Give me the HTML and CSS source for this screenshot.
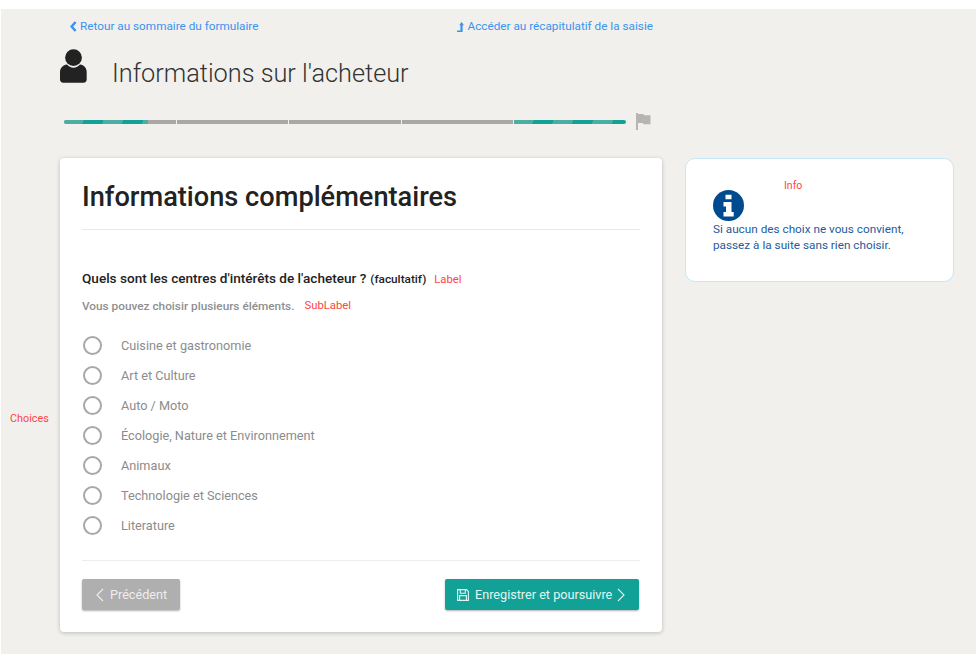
FILE: index.html
```html
<!DOCTYPE html>
<html lang="fr">
<head>
<meta charset="utf-8">
<title>Informations sur l'acheteur</title>
<link rel="stylesheet" href="styles.css">
</head>
<body>
<div class="page">
  <nav class="toplinks">
    <a class="link link-back" href="#"><svg class="ico-chev" viewBox="0 0 7 11"><path d="M5.600 1 1.600 5.500l4 4.500" fill="none" stroke="currentColor" stroke-width="2.500"/></svg>Retour au sommaire du formulaire</a>
    <a class="link link-recap" href="#"><svg class="ico-turn" viewBox="0 0 7 10"><path d="M4.600 0 7 3.200H5.600V10H0V8.400h3.400V3.200H2.200z" fill="currentColor"/></svg>Accéder au récapitulatif de la saisie</a>
  </nav>
  <header class="pagehead">
    <svg class="ico-user" viewBox="0 0 27 34"><circle cx="13.500" cy="8.600" r="8.400" fill="#222"/><path d="M7 15.500c1.600 2 3.900 3.200 6.500 3.200s4.900-1.200 6.500-3.200c4 .6 6.700 3.400 6.700 7.500v7.500c0 1.900-1.300 3.200-3.200 3.200H3.200C1.300 33.700 0 32.400 0 30.500V23c0-4.100 3-6.900 7-7.500z" fill="#222"/></svg>
    <h1>Informations sur l'acheteur</h1>
  </header>
  <div class="progress">
    <div class="seg seg-first"><div class="seg-fill"></div></div>
    <div class="seg"></div>
    <div class="seg"></div>
    <div class="seg"></div>
    <div class="seg seg-last"><div class="seg-fill seg-fill-full"></div></div>
    <svg class="ico-flag" viewBox="0 0 15 17"><path d="M0 0h2v17H0zM2 1h5l1.500 1.300H14.500v9H8L6.500 10H2z" fill="#b5b5b3"/></svg>
  </div>
  <div class="columns">
    <main class="card">
      <h2>Informations complémentaires</h2>
      <div class="question">
        <div class="label-row"><span class="label">Quels sont les centres d'intérêts de l'acheteur ?</span> <span class="optional">(facultatif)</span><span class="note note-label">Label</span></div>
        <div class="sub-row"><span class="sublabel">Vous pouvez choisir plusieurs éléments.</span><span class="note note-sub">SubLabel</span></div>
      </div>
      <ul class="choices">
        <li><span class="radio"></span>Cuisine et gastronomie</li>
        <li><span class="radio"></span>Art et Culture</li>
        <li><span class="radio"></span>Auto / Moto</li>
        <li><span class="radio"></span>Écologie, Nature et Environnement</li>
        <li><span class="radio"></span>Animaux</li>
        <li><span class="radio"></span>Technologie et Sciences</li>
        <li><span class="radio"></span>Literature</li>
      </ul>
      <div class="actions">
        <button class="btn btn-prev" type="button"><svg class="ico-btnchev" viewBox="0 0 8 14"><path d="M7 1 1 7l6 6" fill="none" stroke="currentColor" stroke-width="1.100"/></svg>Précédent</button>
        <button class="btn btn-next" type="button"><svg class="ico-save" viewBox="0 0 12 12"><path d="M1.500.6h8L11.400 2.500v8.900H.6V.6zM3.300.8v3.400h5V.8M2.600 11.200V6.600h6.800v4.600" fill="none" stroke="currentColor" stroke-width="1.100"/></svg>Enregistrer et poursuivre<svg class="ico-btnchev ico-right" viewBox="0 0 8 14"><path d="m1 1 6 6-6 6" fill="none" stroke="currentColor" stroke-width="1.100"/></svg></button>
      </div>
    </main>
    <aside class="info">
      <svg class="ico-info" viewBox="0 0 31 31"><circle cx="15.500" cy="15.500" r="15.500" fill="#004a8f"/><path d="M12.500 4.800h6v4.400h-6zM10.500 12h8v10h2.200v4.400h-10.200V22h2.500v-5.600h-2.500z" fill="#fff"/></svg>
      <p>Si aucun des choix ne vous convient, passez à la suite sans rien choisir.</p>
      <span class="note note-info">Info</span>
    </aside>
  </div>
  <span class="note note-choices">Choices</span>
</div>
</body>
</html>
```
FILE: styles.css
```css
* { box-sizing: border-box; }
html, body { margin: 0; padding: 0; background: #fff; }
body { font-family: Roboto, "Liberation Sans", sans-serif; overflow: hidden; }
.page {
  position: relative;
  margin: 9px 0 0 1px;
  height: 645px;
  background: #f1f0ec;
  padding: 0 22px 0 59px;
}
.toplinks { display: flex; height: 35px; padding: 10px 0 0 10px; font-size: 11.750px; line-height: 15px; align-items: flex-start; }
.link { color: #3a93ee; text-decoration: none; display: flex; align-items: center; white-space: nowrap; }
.link-recap { margin-left: 199px; }
.ico-chev { width: 7px; height: 11px; margin-right: 3px; }
.ico-turn { width: 7px; height: 10px; margin-right: 3px; }
.pagehead { display: flex; align-items: flex-start; height: 68px; }
.ico-user { width: 27px; height: 34px; margin-top: 5px; }
h1 { margin: 14px 0 0 25px; font-size: 25.300px; line-height: 32px; font-weight: 300; color: #333; }
.progress { display: flex; align-items: center; gap: 1px; height: 20px; margin-left: 4px; width: 595px; padding-right: 33px; position: relative; }
.seg { flex: 1; height: 4px; background: #a9a8a5; }
.seg-first { border-radius: 2px 0 0 2px; overflow: hidden; }
.seg-last { border-radius: 0 2px 2px 0; overflow: hidden; }
.seg-fill {
  width: 75%;
  height: 100%;
  background: repeating-linear-gradient(115deg, #4baea3 0 18px, #12a196 18px 36px);
}
.seg-fill-full { width: 100%; }
.ico-flag { position: absolute; left: 572px; top: 1px; width: 15px; height: 17px; }
.columns { display: flex; align-items: flex-start; gap: 23px; margin-top: 26px; }
.card {
  width: 602px;
  height: 474px;
  background: #fff;
  border-radius: 4px;
  box-shadow: 0 1px 4px rgba(0,0,0,.22);
  padding: 0 22px;
}
h2 {
  margin: 0;
  height: 72px;
  padding-top: 22px;
  font-size: 27.200px;
  line-height: 34px;
  font-weight: 500;
  color: #222;
  border-bottom: 1px solid #e8e8e6;
}
.question { margin-top: 40px; }
.label-row { display: flex; align-items: baseline; height: 20px; color: #222; white-space: pre; }
.label { font-size: 13.570px; font-weight: 500; }
.optional { font-size: 11.800px; font-weight: 500; margin-left: 4px; }
.sub-row { display: flex; align-items: baseline; margin-top: 9px; height: 20px; }
.sublabel { font-size: 11.800px; font-weight: 500; color: #8f8f8f; }
.note { color: #f44; font-size: 11px; line-height: 13px; }
.note-label { margin-left: 8px; font-size: 11.300px; }
.note-sub { margin-left: 10px; position: relative; top: -1px; font-size: 11.300px; }
.choices { list-style: none; margin: 12px 0 0; padding: 0; }
.choices li { display: flex; align-items: center; height: 29.900px; font-size: 12.700px; color: #8c8c8c; }
.radio { width: 19px; height: 19px; border: 2px solid #a8a8a8; border-radius: 50%; margin: 0 19px 0 1px; }
.actions { display: flex; justify-content: space-between; align-items: flex-start; margin-top: 20px; padding: 18px 1px 0 0; border-top: 1px solid #eee; }
.btn {
  display: flex; align-items: center; height: 31px; border: 0; border-radius: 2px; color: #fff; padding: 0;
  font-family: inherit; font-size: 12.650px; box-shadow: 0 1px 2px rgba(0,0,0,.3);
}
.btn-prev { width: 98px; background: #afafaf; color: #eee; padding-left: 14px; }
.btn-next { width: 194px; background: #12a196; color: #e4f5f2; padding-left: 12px; }
.ico-btnchev { width: 8px; height: 14px; margin-right: 6px; }
.ico-right { margin: 0 0 0 5px; }
.ico-save { width: 12px; height: 12px; margin-right: 6px; }
.info {
  width: 269px;
  height: 124px;
  background: #fff;
  border: 1.500px solid #c4e8f8;
  border-radius: 10px;
  padding: 31px 27px 0;
}
.ico-info { display: block; width: 31px; height: 31px; }
.info p { margin: 0; font-size: 11.750px; line-height: 16px; color: #1d5c9c; }
.note-info { position: absolute; left: 783px; top: 170px; font-size: 10.500px; }
.note-choices { position: absolute; left: 9px; top: 403px; font-size: 10.800px; }
```
